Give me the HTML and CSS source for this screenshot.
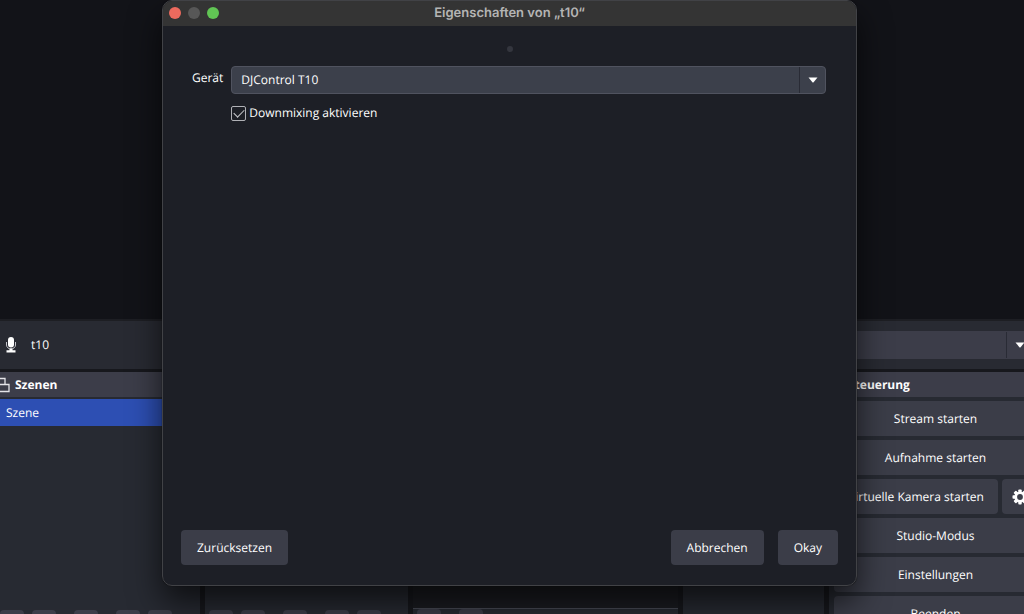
FILE: index.html
```html
<!DOCTYPE html>
<html lang="de">
<head>
<meta charset="utf-8">
<title>Eigenschaften von „t10“</title>
<link rel="stylesheet" href="styles.css">
</head>
<body>
<main class="app">
  <div class="preview"></div>
  <div class="source-bar">
    <svg class="mic" viewBox="0 0 12 16" aria-hidden="true">
      <rect x="3" y="0" width="6" height="10.500" rx="3" fill="#fff"/>
      <path d="M1.500 5v3a4.500 4 0 0 0 9 0V5" fill="none" stroke="#c4c4ca" stroke-width="1"/>
      <path d="M4.500 11.500h3v1.800h3V15.500h-9v-2.200h3z" fill="#fff"/>
    </svg>
    <span class="source-name">t10</span>
    <div class="select-box source-select">
      <select aria-label="Audiogerät"><option></option></select>
      <span class="select-arrow"><svg viewBox="0 0 10 6" aria-hidden="true"><path d="M.5.5h9L5.600 5.200q-.6.600-1.200 0z" fill="#fff"/></svg></span>
    </div>
  </div>
  <div class="docks">
    <section class="dock scenes">
      <h2 class="dock-title">
        <svg class="dock-icon" viewBox="0 0 14 16" aria-hidden="true"><path d="M1 1.500h8v6H1zM1 7.500h12v7H1z" fill="none" stroke="#e4e4e8" stroke-width="1.300"/></svg>
        Szenen
      </h2>
      <div class="dock-body"><button class="scene">Szene</button></div>
      <div class="tools"><i></i><i></i><i class="apart"></i><i class="apart"></i><i></i></div>
    </section>
    <section class="dock sources">
      <div class="dock-body"></div>
      <div class="tools"><i></i><i></i><i class="apart"></i><i class="apart"></i><i></i></div>
    </section>
    <section class="dock mixer">
      <div class="dock-body"></div>
      <div class="tools"><i></i><i class="apart"></i></div>
    </section>
    <section class="dock transitions"><div class="dock-body"></div></section>
    <section class="dock controls">
      <h2 class="dock-title">Steuerung</h2>
      <div class="control-list">
        <button class="btn">Stream starten</button>
        <button class="btn">Aufnahme starten</button>
        <div class="control-row">
          <button class="btn">Virtuelle Kamera starten</button>
          <button class="btn gear" aria-label="Kamera konfigurieren">
            <svg viewBox="0 0 16 16" aria-hidden="true"><g fill="#fff"><rect x="6.300" y=".5" width="3.400" height="15" rx=".8"/><rect x="6.300" y=".5" width="3.400" height="15" rx=".8" transform="rotate(45 8 8)"/><rect x="6.300" y=".5" width="3.400" height="15" rx=".8" transform="rotate(90 8 8)"/><rect x="6.300" y=".5" width="3.400" height="15" rx=".8" transform="rotate(135 8 8)"/><circle cx="8" cy="8" r="5.600"/></g><circle cx="8" cy="8" r="2.900" fill="#3b3d48"/></svg>
          </button>
        </div>
        <button class="btn">Studio-Modus</button>
        <button class="btn">Einstellungen</button>
        <button class="btn">Beenden</button>
      </div>
    </section>
  </div>
</main>

<section class="window" role="dialog" aria-labelledby="window-title">
  <header class="titlebar">
    <div class="lights">
      <button class="light close" aria-label="Schließen"></button>
      <button class="light minimize" aria-label="Minimieren" disabled></button>
      <button class="light zoom" aria-label="Vergrößern"></button>
    </div>
    <h1 id="window-title">Eigenschaften von „t10“</h1>
  </header>
  <div class="grip"></div>
  <form class="form">
    <label class="label" for="device">Gerät</label>
    <div class="select-box">
      <select id="device"><option>DJControl T10</option></select>
      <span class="select-arrow"><svg viewBox="0 0 10 6" aria-hidden="true"><path d="M.5.5h9L5.600 5.200q-.6.600-1.200 0z" fill="#fff"/></svg></span>
    </div>
    <label class="check"><input type="checkbox" checked>Downmixing aktivieren</label>
  </form>
  <footer class="actions">
    <button class="btn reset">Zurücksetzen</button>
    <button class="btn">Abbrechen</button>
    <button class="btn">Okay</button>
  </footer>
</section>
</body>
</html>
```

FILE: styles.css
```css
* {
  box-sizing: border-box;
}

body {
  margin: 0;
  position: relative;
  height: 100vh;
  overflow: hidden;
  background: #17181d;
  color: #fff;
  font: 12px/16px "Open Sans", "Noto Sans", sans-serif;
  text-rendering: geometricPrecision;
}

button,
select {
  font: inherit;
  color: inherit;
  text-rendering: inherit;
}

h1,
h2 {
  margin: 0;
}

/* Main window */
.app {
  width: calc(100% + 13px);
  height: 100%;
  display: flex;
  flex-direction: column;
}

.preview {
  flex: 1;
  background: #121318;
  border-bottom: 2px solid #1d1e23;
}

.source-bar {
  height: 48px;
  display: flex;
  align-items: center;
  padding: 0 4px 0 5px;
  background: #282a32;
}

.mic {
  width: 12px;
  height: 16px;
  margin-right: 14px;
}

.source-name {
  flex: 1;
}

.source-select {
  width: 300px;
}

.docks {
  height: 242px;
  margin-top: 3px;
  display: grid;
  grid-template-columns: 200px 203px 1fr 141px 208px;
  gap: 5px;
}

.dock {
  display: flex;
  flex-direction: column;
  min-width: 0;
  overflow: hidden;
  background: #272a32;
}

.dock-title {
  display: flex;
  align-items: center;
  height: 25px;
  flex: none;
  background: #3c3d49;
  font-size: 12px;
  line-height: 16px;
}

.dock-icon {
  width: 14px;
  height: 16px;
  margin: 0 5px 0 -4px;
}

.dock-body {
  flex: 1;
  padding-top: 2px;
  border-bottom: 1px solid #282a32;
}

.scene {
  display: block;
  width: 100%;
  height: 27px;
  padding: 0 6px;
  border: 0;
  background: #2d4fb3;
  text-align: left;
}

.tools {
  display: flex;
  height: 4px;
  padding-left: 4px;
  gap: 8px;
}

.scenes .tools {
  padding-left: 0;
}

.tools i {
  width: 24px;
  border-radius: 4px 4px 0 0;
  background: #3c3d49;
}

.tools .apart {
  margin-left: 10px;
}

.mixer .dock-body {
  background: #1b1c21;
  border-bottom-color: #484a54;
}

.mixer .tools {
  height: 5px;
}

.controls .dock-title {
  padding-left: 19px;
}

.control-list {
  display: flex;
  flex-direction: column;
  gap: 4px;
  padding: 4px 0 0 5px;
}

.control-row {
  display: flex;
  gap: 4px;
}

.control-row .btn {
  flex: 1;
  padding: 0;
}

.control-row .gear {
  flex: 0 0 35px;
  display: grid;
  place-items: center;
}

.gear svg {
  width: 16px;
  height: 16px;
}

.btn {
  height: 35px;
  flex: none;
  padding: 0 16px;
  border: 0;
  border-radius: 4px;
  background: #3b3d48;
  white-space: nowrap;
}

/* Drop-down */
.select-box {
  position: relative;
  height: 28px;
}

.select-box select {
  appearance: none;
  width: 100%;
  height: 100%;
  padding: 0 36px 0 9px;
  border: 1px solid #50535f;
  border-radius: 4px;
  background: #3c404b;
}

.source-select select {
  border-color: #3c3d49;
  background: #3c3d49;
}

.select-arrow {
  position: absolute;
  top: 1px;
  right: 0;
  bottom: 1px;
  width: 27px;
  display: grid;
  place-items: center;
  border-left: 1px solid #292b35;
  pointer-events: none;
}

.select-arrow svg {
  width: 10px;
  height: 6px;
}

/* Properties window */
.window {
  position: absolute;
  top: 0;
  left: 162px;
  right: 167px;
  bottom: 28px;
  display: flex;
  flex-direction: column;
  border: 1px solid #414246;
  border-radius: 10px;
  background: #1d1f26;
  box-shadow: 0 16px 32px rgba(0, 0, 0, 0.65), 0 0 1px #000;
}

.titlebar {
  display: grid;
  grid-template-columns: 1fr auto 1fr;
  align-items: center;
  height: 25px;
  padding: 0 6px 2px;
  border-radius: 9px 9px 0 0;
  background: #343434;
}

.titlebar h1 {
  color: #b4b4b4;
  font: 600 13px/16px Inter, "Open Sans", sans-serif;
}

.lights {
  display: flex;
  gap: 7px;
}

.light {
  width: 12px;
  height: 12px;
  padding: 0;
  border: 0;
  border-radius: 50%;
}

.close {
  background: #ed6a5e;
}

.minimize {
  background: #575757;
}

.zoom {
  background: #61c554;
}

.grip {
  width: 6px;
  height: 6px;
  margin: 20px auto 14px;
  border-radius: 50%;
  background: #34363e;
}

.form {
  flex: 1;
  display: grid;
  grid-template-columns: auto 1fr;
  align-content: start;
  gap: 11px 8px;
  padding: 0 30px 0 29px;
}

.label {
  padding-top: 4px;
}

.check {
  grid-column: 2;
  display: flex;
  align-items: center;
  gap: 3px;
}

.check input {
  appearance: none;
  display: grid;
  place-items: center;
  width: 15px;
  height: 15px;
  margin: 0;
  border: 1px solid #b0b1b6;
  border-radius: 2px;
}

.check input:checked::before {
  content: "";
  width: 9px;
  height: 5px;
  margin-bottom: 3px;
  border: solid #c8c9cd;
  border-width: 0 0 1px 1px;
  transform: rotate(-45deg);
}

.actions {
  display: flex;
  gap: 14px;
  padding: 0 18px 20px;
}

.reset {
  margin-right: auto;
}
```
